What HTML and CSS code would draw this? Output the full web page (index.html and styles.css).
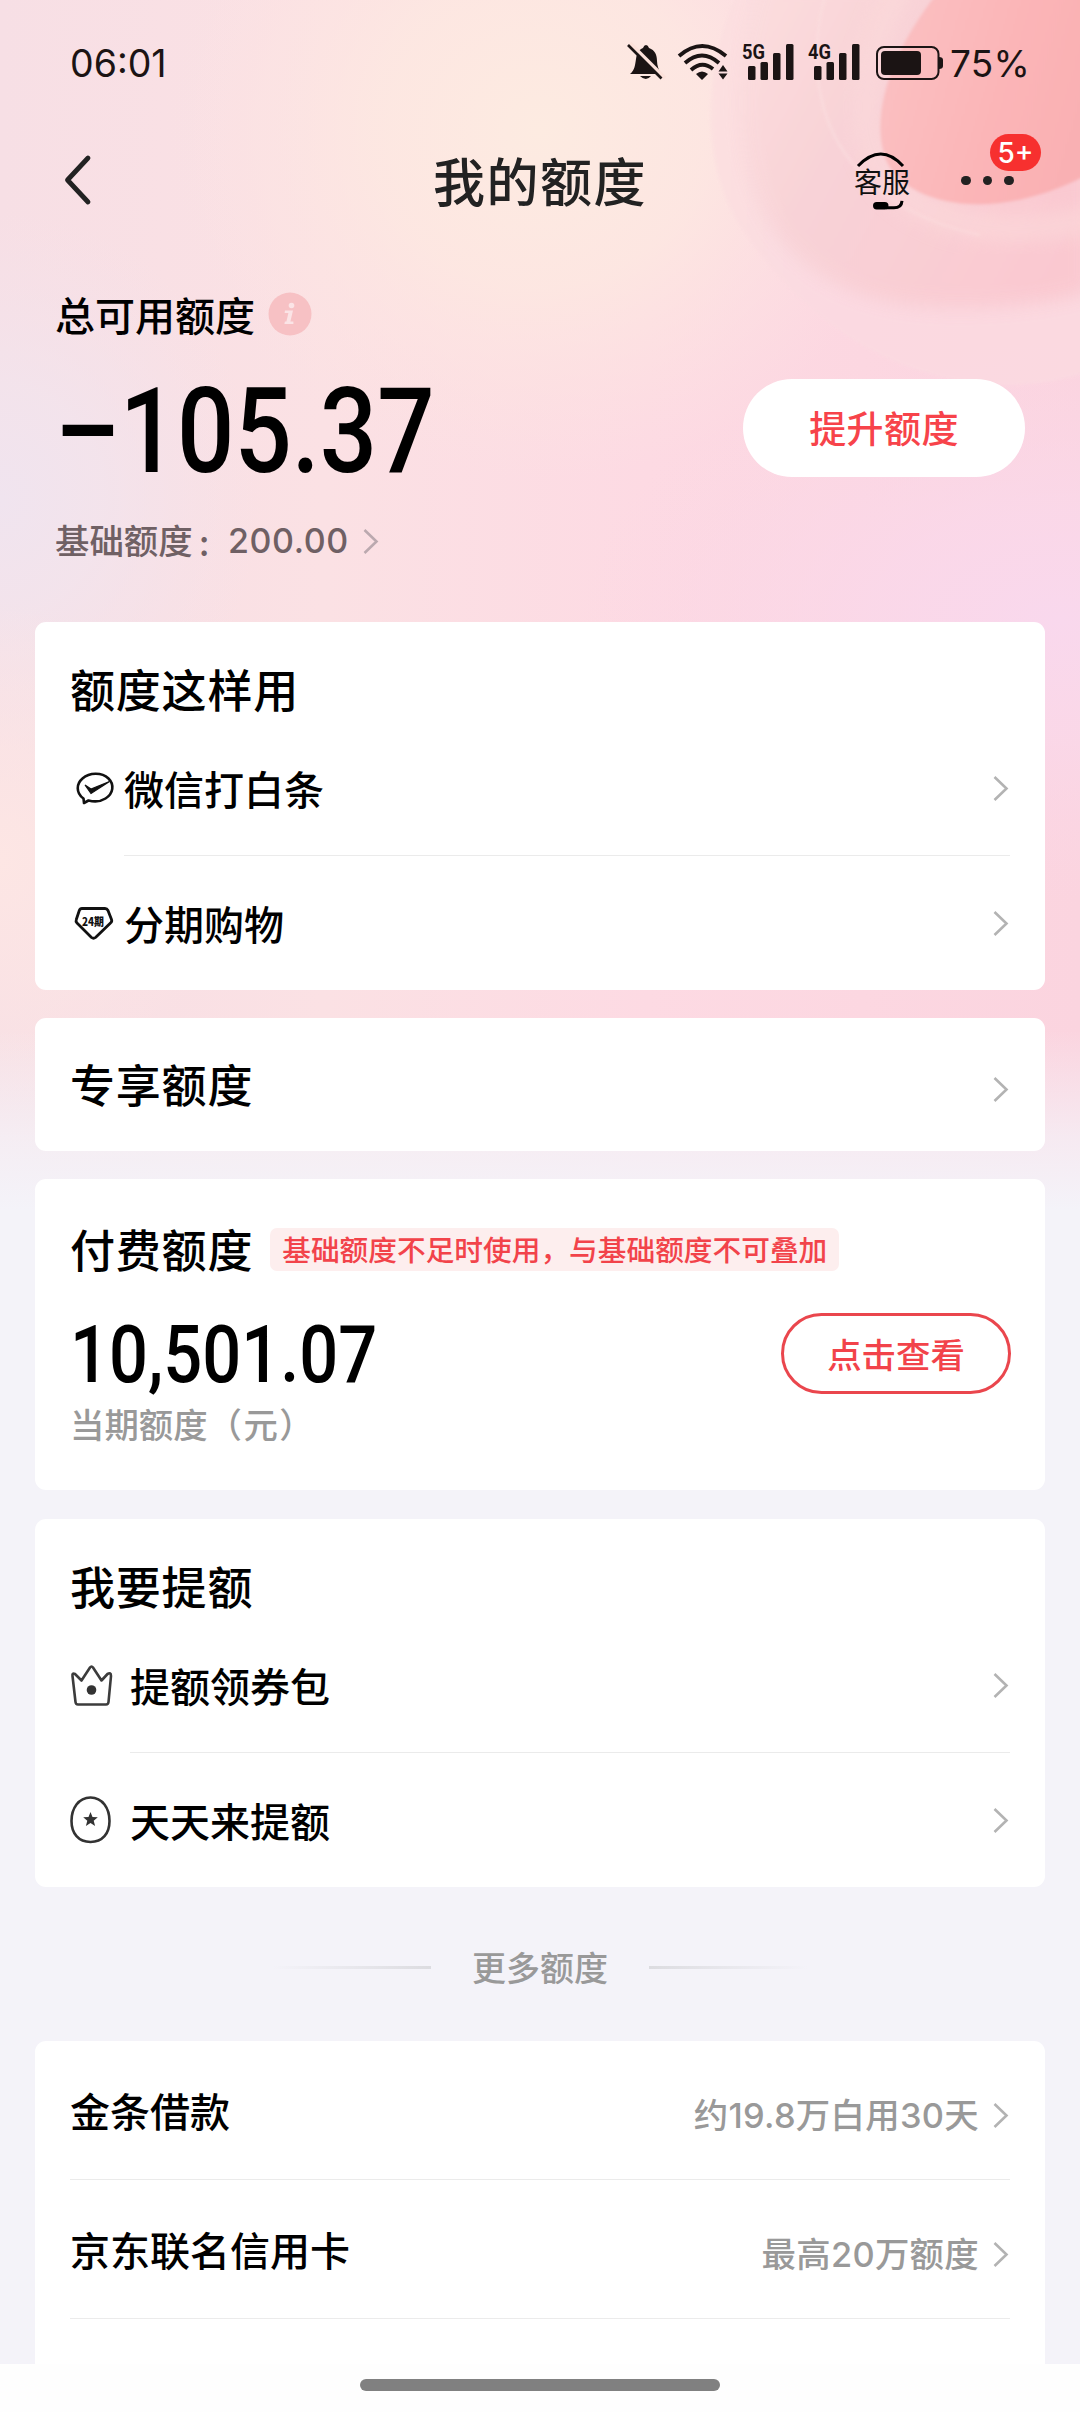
FILE: index.html
```html
<!DOCTYPE html>
<html lang="zh-CN">
<head>
<meta charset="utf-8">
<title>我的额度</title>
<link rel="stylesheet" href="styles.css">
</head>
<body>
<svg class="defs" width="0" height="0" aria-hidden="true">
  <symbol id="chevron" viewBox="0 0 17 27"><path d="M1.500 2 13.500 13.500 1.500 25" fill="none" stroke="currentColor" stroke-width="2.600"/></symbol>
</svg>
<div class="page">
  <svg class="backdrop" viewBox="0 0 1080 1230" preserveAspectRatio="none" aria-hidden="true">
    <defs>
      <linearGradient id="base" x1="0" x2="1" y1="0" y2="0"><stop offset="0" stop-color="#f7dfe5"/><stop offset=".3" stop-color="#fbe1e4"/><stop offset=".6" stop-color="#fddae3"/><stop offset="1" stop-color="#fbd4df"/></linearGradient>
      <radialGradient id="peach"><stop offset="0" stop-color="#fdebe1"/><stop offset=".45" stop-color="#fde8e1" stop-opacity=".85"/><stop offset="1" stop-color="#fde3e2" stop-opacity="0"/></radialGradient>
      <radialGradient id="lilac"><stop offset="0" stop-color="#f0e4ef"/><stop offset=".4" stop-color="#f2e4ed" stop-opacity=".8"/><stop offset="1" stop-color="#f4e2ea" stop-opacity="0"/></radialGradient>
      <radialGradient id="orchid"><stop offset="0" stop-color="#f9d8ed"/><stop offset=".4" stop-color="#fad8ea" stop-opacity=".8"/><stop offset="1" stop-color="#fbd6e6" stop-opacity="0"/></radialGradient>
      <radialGradient id="warm"><stop offset="0" stop-color="#fde6e4"/><stop offset="1" stop-color="#fde6e4" stop-opacity="0"/></radialGradient>
      <linearGradient id="disc" x1="0" x2="1" y1=".2" y2=".5"><stop offset="0" stop-color="#fac0c2"/><stop offset=".6" stop-color="#fbb5b7"/><stop offset="1" stop-color="#f9b0b3"/></linearGradient>
      <linearGradient id="outer" x1="0" x2=".25" y1="0" y2="0"><stop offset="0" stop-color="#fce0e0"/><stop offset="1" stop-color="#fbdae1"/></linearGradient>
      <linearGradient id="inner" x1="0" x2="1" y1=".2" y2=".7"><stop offset="0" stop-color="#fbdcdd"/><stop offset=".35" stop-color="#f8d2d6"/><stop offset="1" stop-color="#fac7cf"/></linearGradient>
      <linearGradient id="fade" x1="0" x2="0" y1="0" y2="1"><stop offset="0" stop-color="#f4f3f9" stop-opacity="0"/><stop offset=".6" stop-color="#f4f3f9" stop-opacity=".7"/><stop offset="1" stop-color="#f4f3f9"/></linearGradient>
      <filter id="soft" x="-10%" y="-10%" width="120%" height="120%"><feGaussianBlur stdDeviation="9"/></filter>
      <filter id="edge"><feGaussianBlur stdDeviation="1.500"/></filter>
    </defs>
    <rect width="1080" height="1230" fill="url(#base)"/>
    <ellipse cx="540" cy="130" rx="370" ry="350" fill="url(#peach)"/>
    <ellipse cx="0" cy="500" rx="260" ry="290" fill="url(#lilac)"/>
    <ellipse cx="1060" cy="620" rx="480" ry="280" fill="url(#orchid)"/>
    <ellipse cx="0" cy="860" rx="220" ry="260" fill="url(#warm)"/>
    <path d="M735 -5C700 80 702 170 742 230C800 315 890 385 1010 385Q1050 385 1085 373V-5Z" fill="url(#outer)" filter="url(#edge)" opacity=".85"/>
    <path d="M762 -20C728 80 735 170 775 232C820 290 880 308 960 308Q1030 308 1090 292V-20Z" fill="url(#inner)" filter="url(#soft)" opacity=".9"/>
    <path d="M825 -5C808 60 818 120 850 160C880 200 930 225 980 235" fill="none" stroke="#fbdfe0" stroke-width="2" opacity=".8" filter="url(#edge)"/>
    <path d="M905 -20C860 60 855 130 885 175C925 225 1000 240 1090 220" fill="none" stroke="#fcdadb" stroke-width="26" opacity=".6" filter="url(#soft)"/>
    <path d="M936 -5C896 45 868 112 886 160C905 204 990 225 1085 176V-5Z" fill="url(#disc)" filter="url(#edge)"/>
    <rect y="1030" width="1080" height="180" fill="url(#fade)"/><rect y="1210" width="1080" height="20" fill="#f4f3f9"/>
  </svg>

  <header class="statusbar">
    <span class="clock">06:01</span>
    <svg class="status-icons" viewBox="620 38 325 48" aria-hidden="true">
      <g fill="#1b1414">
        <path d="M630 74c5-4 5-9 6-15c1-7 4-10 7-11q1-3 3-3q2 0 3 3c6 2 8 7 8 13c0 5 2 9 4 13z"/>
        <path d="M640 76h11q-5 6-11 0z"/>
      </g>
      <path d="M630 43 665 78" stroke="#fce1da" stroke-width="3.500"/><path d="M628 45 661.500 78.500" stroke="#1b1414" stroke-width="2.600"/>
      <g fill="none" stroke="#1b1414" stroke-width="3.800">
        <path d="M679 56Q702 36 726 56"/><path d="M685 63Q702 48 719 63"/><path d="M691 70Q702 60 713 69"/>
      </g>
      <path d="M696 74q6-5 12 0l-6 6z M718.500 71.500l4.500-6.500 4.500 6.500z M718.500 73.500h9l-4.500 6z" fill="#1b1414"/>
      <g fill="#1b1414">
        <rect x="748" y="66" width="7.500" height="14" rx="1.500"/><rect x="760.500" y="62" width="7.500" height="18" rx="1.500"/><rect x="773" y="53" width="7.500" height="27" rx="1.500"/><rect x="786" y="44" width="7.500" height="36" rx="1.500"/>
        <rect x="814" y="66" width="7.500" height="14" rx="1.500"/><rect x="826.500" y="62" width="7.500" height="18" rx="1.500"/><rect x="839" y="53" width="7.500" height="27" rx="1.500"/><rect x="852" y="44" width="7.500" height="36" rx="1.500"/>
        <text class="net" x="742" y="59" textLength="23" lengthAdjust="spacingAndGlyphs">5G</text>
        <text class="net" x="808" y="59" textLength="23" lengthAdjust="spacingAndGlyphs">4G</text>
        <rect x="881" y="51" width="40" height="24" rx="4"/><path d="M939 57q4 0 4 3v6q0 3-4 3z"/>
      </g>
      <rect x="877" y="47" width="61.500" height="32" rx="7" fill="none" stroke="#1b1414" stroke-width="2"/>
    </svg>
    <span class="battery">75%</span>
  </header>

  <nav class="navbar">
    <svg class="back" viewBox="0 0 30 52" aria-hidden="true"><path d="M26 4 5.500 26 26 48" fill="none" stroke="#222" stroke-width="4.800" stroke-linecap="round" stroke-linejoin="round"/></svg>
    <h1>我的额度</h1>
    <div class="service">
      <svg viewBox="0 0 56 60" aria-hidden="true"><path d="M4 15Q27-9 49 15" fill="none" stroke="#000" stroke-width="3"/><rect x="19" y="51" width="15.500" height="7.500" rx="3.700"/><path d="M32 56.800h8q7.500 0 8-7" fill="none" stroke="#000" stroke-width="3"/></svg>
      <span>客服</span>
    </div>
    <div class="more"><i></i><i></i><i></i><b>5+</b></div>
  </nav>

  <section class="summary">
    <div class="summary-label">总可用额度
      <svg class="info" viewBox="0 0 44 44" aria-hidden="true"><circle cx="22" cy="22" r="21.500" fill="#f7c1c4"/><g fill="#fbe4e6"><circle cx="23.500" cy="13.500" r="2.800"/><path d="M17 18.500h8l-2.600 11h3v2.500h-9l.5-2.500h1.500l2-8.500h-3.800z"/></g></svg>
    </div>
    <div class="summary-main"><strong class="total">–105.37</strong><a class="raise">提升额度</a></div>
    <div class="base-limit"><span class="base-name">基础额度</span><span class="colon">:</span><span class="num">200.00</span><svg class="chev" aria-hidden="true"><use href="#chevron"/></svg></div>
  </section>

  <main class="cards">
    <section class="card">
      <h2>额度这样用</h2>
      <div class="row use-row">
        <svg class="icon" viewBox="70 760 54 56" aria-hidden="true"><path d="M83.500 798.500c-8-6-7-15-1-20c7-6 19-6.500 26 0c6 6 5 15-3 20q-7 4.500-17 2l-4.500 2.500z" fill="none" stroke="#111" stroke-width="2.600" stroke-linejoin="round"/><path d="M85 785l6 4 18.500-7.500-18.500 12z" fill="#111" stroke="#111" stroke-width="1.200"/></svg>
        <div class="row-body"><span>微信打白条</span><svg class="chev" aria-hidden="true"><use href="#chevron"/></svg></div>
      </div>
      <div class="row use-row">
        <svg class="icon" viewBox="70 893 54 56" aria-hidden="true"><path d="M82 906.500h23q2 0 3 2l3.500 9q.8 2-1 3.500l-15 14.500q-2 1.500-4 0l-14.500-14.500q-1.500-1.500-.7-3.500l3-9q.7-2 2.700-2z" fill="none" stroke="#111" stroke-width="2.800" stroke-linejoin="round"/><text class="period" x="82" y="924" textLength="22" lengthAdjust="spacingAndGlyphs">24期</text></svg>
        <div class="row-body"><span>分期购物</span><svg class="chev" aria-hidden="true"><use href="#chevron"/></svg></div>
      </div>
    </section>

    <section class="card exclusive"><h2>专享额度</h2><svg class="chev" aria-hidden="true"><use href="#chevron"/></svg></section>

    <section class="card paid">
      <div class="paid-head"><h2>付费额度</h2><span class="tag">基础额度不足时使用，与基础额度不可叠加</span></div>
      <div class="paid-main"><strong class="amount">10,501.07</strong><a class="view">点击查看</a></div>
      <p>当期额度<span class="paren">（元）</span></p>
    </section>

    <section class="card">
      <h2>我要提额</h2>
      <div class="row lift-row">
        <svg class="icon" viewBox="70 1655 60 60" aria-hidden="true"><path d="M72.500 1676q-.5-3.500 2.500-2l6.500 6.500 8.500-13q1.500-2 3 0l8.500 13 6-6.500q3.500-2 3.500 2l-2.500 26q-.2 2.500-2.500 2.500h-28q-2.300 0-2.500-2.500z" fill="none" stroke="#3c3c3c" stroke-width="2.600" stroke-linejoin="round"/><circle cx="91.500" cy="1690" r="4.800" fill="#333"/></svg>
        <div class="row-body"><span>提额领券包</span><svg class="chev" aria-hidden="true"><use href="#chevron"/></svg></div>
      </div>
      <div class="row lift-row">
        <svg class="icon" viewBox="70 1790 60 60" aria-hidden="true"><path d="M90.500 1797.500c12 0 19 11 19 23.500s-7 21-19 21-19-8.500-19-21 7-23.500 19-23.500z" fill="none" stroke="#333" stroke-width="2.600"/><path d="M90.500 1812l2 4.900 5.300.3-4.100 3.500 1.400 5.200-4.600-2.900-4.600 2.900 1.400-5.200-4.100-3.500 5.300-.3z" fill="#333"/></svg>
        <div class="row-body"><span>天天来提额</span><svg class="chev" aria-hidden="true"><use href="#chevron"/></svg></div>
      </div>
    </section>

    <div class="more-title"><span>更多额度</span></div>

    <section class="card offers">
      <div class="offer"><span>金条借款</span><em>约19.8万白用30天</em><svg class="chev" aria-hidden="true"><use href="#chevron"/></svg></div>
      <div class="offer"><span>京东联名信用卡</span><em>最高20万额度</em><svg class="chev" aria-hidden="true"><use href="#chevron"/></svg></div>
    </section>
  </main>
  <footer class="homebar"><i></i></footer>
</div>
</body>
</html>
```
FILE: styles.css
```css
* { box-sizing: border-box; margin: 0; padding: 0; }
body { background: #f4f3f9; font-family: "Noto Sans CJK SC", sans-serif; color: #000; }
h1, h2 { font-weight: 500; white-space: nowrap; }
i, em { font-style: normal; }
.defs { display: block; }
.page { position: relative; isolation: isolate; display: flex; flex-direction: column; width: 1080px; height: 2412px; overflow: hidden; }
.backdrop { position: absolute; inset: 0 auto auto 0; width: 1080px; height: 1230px; z-index: -1; }

.statusbar { display: flex; align-items: flex-start; height: 122px; padding: 38px 0 0 70px; color: #1b1414; font-family: Inter, sans-serif; }
.clock { width: 550px; font-size: 37.500px; line-height: 52px; letter-spacing: 0; }
.status-icons { width: 325px; height: 48px; }
.battery { padding-left: 5px; font-size: 37px; line-height: 52px; letter-spacing: .2px; }
.net { font: 700 21px Roboto, sans-serif; }
.period { font: 900 11.500px "Noto Sans CJK SC", sans-serif; fill: #111; }

.navbar { display: flex; align-items: center; height: 120px; padding-left: 62px; color: #222; }
.back { width: 30px; height: 52px; margin-top: -4px; }
.navbar h1 { margin: -4px 0 0 341px; width: 421px; font-size: 52px; line-height: 60px; letter-spacing: 1.5px; }
.service { display: grid; width: 56px; height: 60px; margin-top: -3px; color: #111; }
.service > * { grid-area: 1 / 1; }
.service span { align-self: center; font-size: 28px; line-height: 34px; font-weight: 400; white-space: nowrap; }
.more { position: relative; display: flex; gap: 12px; margin: -3px 0 0 51px; }
.more i { width: 9.500px; height: 9.500px; border-radius: 50%; background: #222; }
.more b { position: absolute; left: 29px; top: -42px; width: 51px; height: 37px; border-radius: 19px; background: #f7302f; color: #fff; font: 500 28px/39px Inter, sans-serif; text-align: center; }

.summary { height: 380px; padding: 45px 55px 0; }
.summary-label { display: flex; align-items: center; gap: 13px; height: 54px; font-size: 40px; line-height: 54px; font-weight: 500; }
.info { width: 44px; height: 44px; }
.summary-main { display: flex; justify-content: space-between; align-items: center; height: 174px; }
.total { display: block; width: 380px; margin-top: 8px; font: 500 118px/120px Roboto, sans-serif; white-space: nowrap; transform: scaleX(.855); transform-origin: 0 50%; }
.raise { width: 282px; height: 98px; border-radius: 49px; background: #fff; color: #f7434a; font-size: 37px; line-height: 97px; font-weight: 500; letter-spacing: .4px; text-align: center; }
.base-limit { display: flex; align-items: center; height: 52px; color: #6f6064; font-size: 34.400px; line-height: 50px; font-weight: 500; }
.base-name { width: 138px; margin-top: -4px; }
.colon { width: 35px; padding-left: 6px; }
.num { width: 134px; font-family: Inter, sans-serif; font-size: 34px; font-weight: 500; letter-spacing: .6px; }
.chev { flex: none; width: 17px; height: 27px; color: #b3b3b3; }
.base-limit .chev { margin-left: 1px; color: #bba9af; }

.cards { display: flex; flex-direction: column; flex: 1; min-height: 0; padding: 0 35px; overflow: hidden; }
.card { flex: none; margin-bottom: 28px; padding: 37px 35px 0; border-radius: 11px; background: #fff; }
.card h2 { height: 62px; font-size: 45px; line-height: 59px; letter-spacing: .8px; }
.row { display: flex; height: 134px; align-items: center; }
.row + .row { height: 135px; }
.row-body { display: flex; flex: 1; height: 100%; align-items: center; justify-content: space-between; font-size: 40px; font-weight: 500; }
.row + .row .row-body { border-top: 1px solid #ebebeb; }
.row-body span { margin-top: -1px; }
.use-row .icon { width: 54px; height: 56px; }
.lift-row .icon { width: 60px; height: 60px; }
.exclusive { display: flex; height: 133px; justify-content: space-between; padding-top: 36px; }
.exclusive .chev { margin-top: 22px; }

.paid { height: 311px; margin-bottom: 29px; padding-top: 40px; }
.paid-head { display: flex; gap: 17px; }
.tag { height: 43px; margin-top: 9px; padding: 0 12px; border-radius: 7px; background: #fdeeee; color: #f2434a; font-size: 28.700px; font-weight: 500; line-height: 41px; white-space: nowrap; }
.paid-main { display: flex; justify-content: space-between; height: 81px; margin-top: 32px; }
.amount { width: 340px; font: 500 79px/84px Roboto, sans-serif; transform: scaleX(.868); transform-origin: 0 50%; }
.view { width: 230px; height: 81px; margin-right: -1px; border: 3px solid #ea464d; border-radius: 41px; color: #f2434a; font-size: 34.400px; line-height: 74px; font-weight: 500; text-align: center; }
.paid p { margin-top: 4px; color: #999; font-size: 34.400px; line-height: 51px; font-weight: 500; }
.paren { letter-spacing: 1.500px; }

.more-title { display: flex; flex: none; align-items: center; justify-content: center; gap: 41px; height: 126px; padding-bottom: 22px; color: #999; font-size: 34px; font-weight: 500; line-height: 50px; }
.more-title::before, .more-title::after { content: ""; width: 159px; height: 3px; background: linear-gradient(90deg, #dcdce000, #dcdce0); }
.more-title::after { background: linear-gradient(270deg, #dcdce000, #dcdce0); }

.offers { padding-top: 0; height: 360px; }
.offer { display: flex; align-items: center; height: 139px; border-bottom: 1px solid #ebebeb; font-size: 40px; font-weight: 500; }
.offer span { flex: 1; margin-top: -1px; }
.offer em { margin: 11px 14px 0 0; color: #999; font: 500 34.400px/50px Inter, "Noto Sans CJK SC", sans-serif; letter-spacing: .3px; }
.offer .chev { margin-top: 11px; }
.homebar { display: flex; flex: none; height: 48px; justify-content: center; background: #fefefe; }
.homebar i { width: 360px; height: 12px; margin-top: 15px; border-radius: 6px; background: #808080; }
```
